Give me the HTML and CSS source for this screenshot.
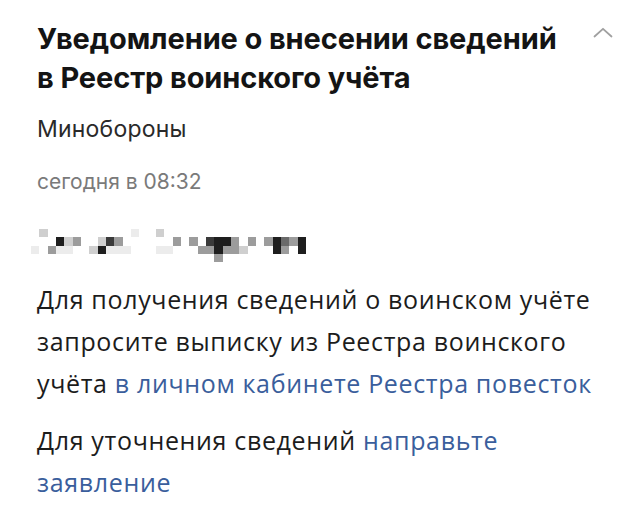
FILE: index.html
```html
<!DOCTYPE html>
<html lang="ru">
<head>
<meta charset="utf-8">
<title>Уведомление</title>
<link rel="stylesheet" href="styles.css">
</head>
<body>
<div class="card">
  <div class="head">
    <h1 class="title">Уведомление о внесении сведений в Реестр воинского учёта</h1>
    <svg class="chev" width="20" height="11" viewBox="0 0 20 11"><path d="M1.5 9.5 L10 1.8 L18.5 9.5" fill="none" stroke="#a0a0a0" stroke-width="1.8" stroke-linecap="round" stroke-linejoin="round"/></svg>
  </div>
  <div class="org">Минобороны</div>
  <div class="date">сегодня в 08:32</div>
  <div class="blur" aria-hidden="true">
    <i></i><i class="s2"></i><i></i><i></i><i></i><i></i><i></i><i></i><i></i><i></i><i></i><i></i><i class="s1"></i><i></i><i></i><i class="s2"></i><i></i><i></i><i></i><i></i><i></i><i></i><i></i><i></i><i></i><i></i><i></i><i></i><i></i><i></i><i></i><i></i><i></i>
    <i></i><i></i><i></i><i class="s6"></i><i class="s2"></i><i class="s3"></i><i></i><i></i><i class="s2"></i><i class="s5"></i><i class="s3"></i><i></i><i></i><i></i><i></i><i></i><i></i><i class="s3"></i><i></i><i class="s3"></i><i></i><i class="s5"></i><i class="s6"></i><i class="s6"></i><i class="s3"></i><i></i><i class="s3"></i><i></i><i class="s3"></i><i class="s6"></i><i class="s4"></i><i class="s3"></i><i class="s6"></i>
    <i class="s1"></i><i></i><i class="s3"></i><i class="s1"></i><i class="s1"></i><i></i><i></i><i class="s2"></i><i class="s6"></i><i class="s1"></i><i class="s1"></i><i class="s1"></i><i></i><i></i><i></i><i class="s1"></i><i class="s1"></i><i></i><i></i><i></i><i class="s3"></i><i class="s3"></i><i class="s6"></i><i class="s3"></i><i class="s3"></i><i class="s2"></i><i></i><i></i><i></i><i class="s6"></i><i class="s3"></i><i></i><i class="s6"></i>
    <i></i><i></i><i></i><i></i><i></i><i></i><i></i><i></i><i></i><i></i><i></i><i></i><i></i><i></i><i></i><i></i><i></i><i></i><i></i><i></i><i></i><i></i><i class="s3"></i><i></i><i></i><i></i><i></i><i></i><i></i><i></i><i></i><i></i><i></i>
  </div>
  <p class="text">Для получения сведений о воинском учёте запросите выписку из Реестра воинского учёта <a class="link" href="#">в личном кабинете Реестра повесток</a></p>
  <p class="text">Для уточнения сведений <a class="link" href="#">направьте заявление</a></p>
</div>
</body>
</html>
```

FILE: styles.css
```css
html, body {
  margin: 0;
  padding: 0;
  background: #ffffff;
}

.card {
  padding: 19px 0 0 37px;
  width: 575px;
}

.head {
  display: flex;
  align-items: flex-start;
  justify-content: space-between;
}

.title {
  margin: 0;
  width: 535px;
  font-family: Inter, "Liberation Sans", sans-serif;
  font-weight: 700;
  font-size: 29px;
  line-height: 39px;
  color: #141414;
  letter-spacing: -0.1px;
}

.chev {
  margin-top: 8px;
  margin-right: -1px;
}

.org {
  margin-top: 19px;
  font-family: Inter, "Liberation Sans", sans-serif;
  font-size: 23px;
  line-height: 26px;
  letter-spacing: 0.2px;
  color: #2a2a2a;
}

.date {
  margin-top: 28px;
  font-family: Inter, "Liberation Sans", sans-serif;
  font-size: 21px;
  line-height: 24px;
  color: #7a7a7a;
}

.blur {
  display: grid;
  grid-template-columns: repeat(33, 8.33px);
  grid-auto-rows: 8.33px;
  margin: 35px 0 0 -6px;
  filter: blur(0.5px);
}

.blur i { display: block; }
.blur .s1 { background: #ececec; }
.blur .s2 { background: #cfcfcf; }
.blur .s3 { background: #9c9c9c; }
.blur .s4 { background: #6a6a6a; }
.blur .s5 { background: #3a3a3a; }
.blur .s6 { background: #1e1e1e; }

.text {
  margin: 16px 0 0 0;
  font-family: "Open Sans", Lato, sans-serif;
  font-size: 25px;
  line-height: 42px;
  letter-spacing: 0.65px;
  color: #1c1c1c;
}

.text + .text {
  margin-top: 15px;
}

.link {
  color: #3a5e9c;
  text-decoration: none;
}
```
